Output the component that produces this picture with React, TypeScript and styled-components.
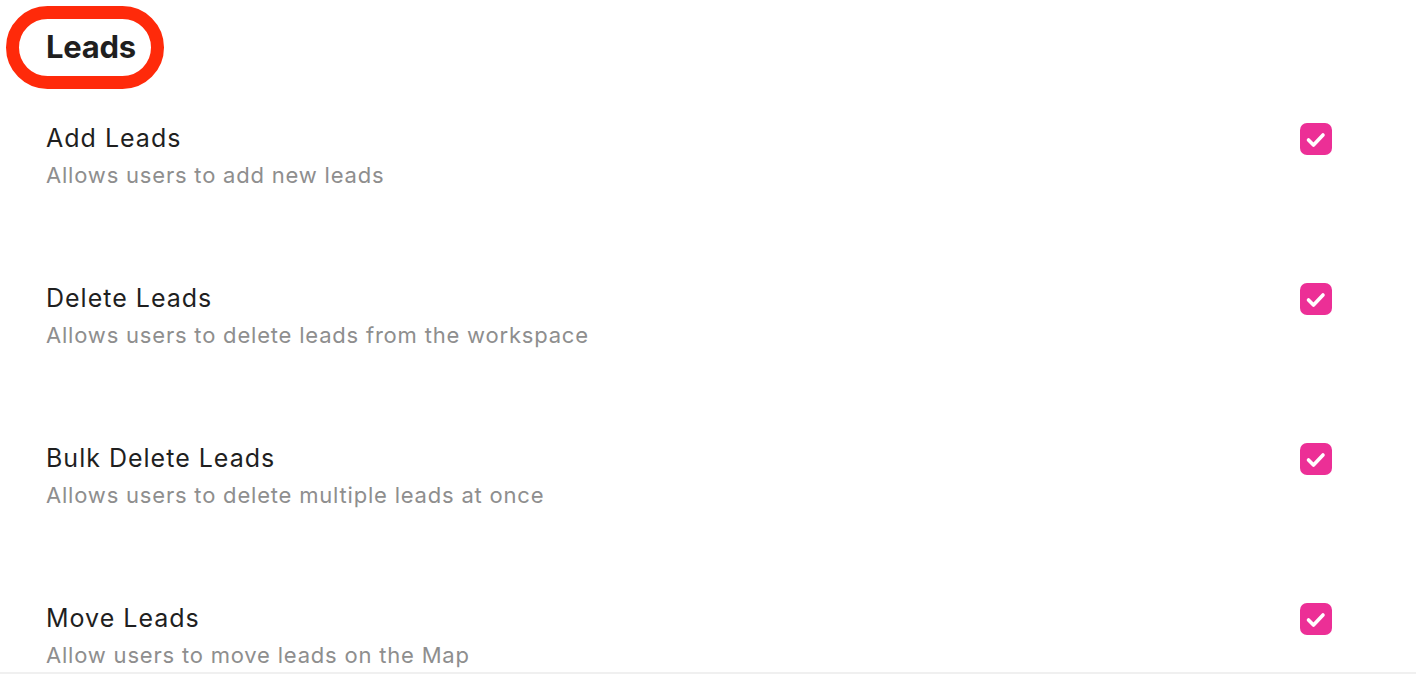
import React from "react";
import styled, { createGlobalStyle } from "styled-components";

const GlobalStyle = createGlobalStyle`
  html, body {
    margin: 0;
    padding: 0;
    background: #ffffff;
    font-family: Inter, "Noto Sans", sans-serif;
    overflow: hidden;
  }
`;

interface Permission {
  id: string;
  title: string;
  description: string;
  enabled: boolean;
}

const permissions: Permission[] = [
  { id: "add", title: "Add Leads", description: "Allows users to add new leads", enabled: true },
  { id: "delete", title: "Delete Leads", description: "Allows users to delete leads from the workspace", enabled: true },
  { id: "bulk", title: "Bulk Delete Leads", description: "Allows users to delete multiple leads at once", enabled: true },
  { id: "move", title: "Move Leads", description: "Allow users to move leads on the Map", enabled: true },
];

const Page = styled.div`
  width: 1416px;
  height: 674px;
  display: flex;
  flex-direction: column;
  overflow: hidden;
`;

const Content = styled.div`
  flex: 1;
  min-height: 0;
  display: flex;
  flex-direction: column;
  padding-left: 46px;
  padding-right: 84px;
  overflow: hidden;
`;

const Header = styled.div`
  height: 113px;
  flex-shrink: 0;
  display: flex;
  align-items: flex-start;
`;

const Heading = styled.h1`
  position: relative;
  margin: 28px 0 0;
  font-size: 31px;
  font-weight: 700;
  color: #1f1f1f;
  line-height: 38px;
  letter-spacing: -0.3px;
`;

// annotation ring drawn over the heading
const Ring = styled.span`
  position: absolute;
  left: -40px;
  top: -22px;
  width: 158px;
  height: 83px;
  box-sizing: border-box;
  border: 13px solid #ff2a0a;
  border-radius: 42px;
  pointer-events: none;
`;

const List = styled.div`
  display: flex;
  flex-direction: column;
  flex-shrink: 0;
`;

const Row = styled.div`
  height: 160px;
  flex-shrink: 0;
  display: flex;
  align-items: flex-start;
  justify-content: space-between;
`;

const Texts = styled.div`
  display: flex;
  flex-direction: column;
  gap: 9px;
  padding-top: 10px;
`;

const Title = styled.div`
  font-size: 25px;
  line-height: 30px;
  color: #1f1f1f;
  letter-spacing: 1px;
`;

const Description = styled.div`
  font-size: 22px;
  line-height: 26px;
  color: #8e8e8e;
  letter-spacing: 0.8px;
`;

const Check = styled.div<{ $on: boolean }>`
  width: 32px;
  height: 32px;
  margin-top: 10px;
  border-radius: 7px;
  box-sizing: border-box;
  background: ${(p) => (p.$on ? "#ec2f96" : "#ffffff")};
  border: ${(p) => (p.$on ? "none" : "2px solid #c8c8c8")};
  display: flex;
  align-items: center;
  justify-content: center;
`;

const Footer = styled.div`
  height: 2px;
  flex-shrink: 0;
  background: #f0f0f0;
`;

const CheckMark = () => (
  <svg width="32" height="32" viewBox="0 0 32 32" fill="none">
    <path d="M8.5 17l5 5 9.5-10" stroke="#ffffff" strokeWidth="3.6" strokeLinecap="round" strokeLinejoin="round" />
  </svg>
);

const App = () => {
  return (
    <Page>
      <GlobalStyle />
      <Content>
        <Header>
          <Heading>
            Leads
            <Ring />
          </Heading>
        </Header>
        <List>
          {permissions.map((p) => (
            <Row key={p.id}>
              <Texts>
                <Title>{p.title}</Title>
                <Description>{p.description}</Description>
              </Texts>
              <Check $on={p.enabled}>{p.enabled && <CheckMark />}</Check>
            </Row>
          ))}
        </List>
      </Content>
      <Footer />
    </Page>
  );
};

export default App;
